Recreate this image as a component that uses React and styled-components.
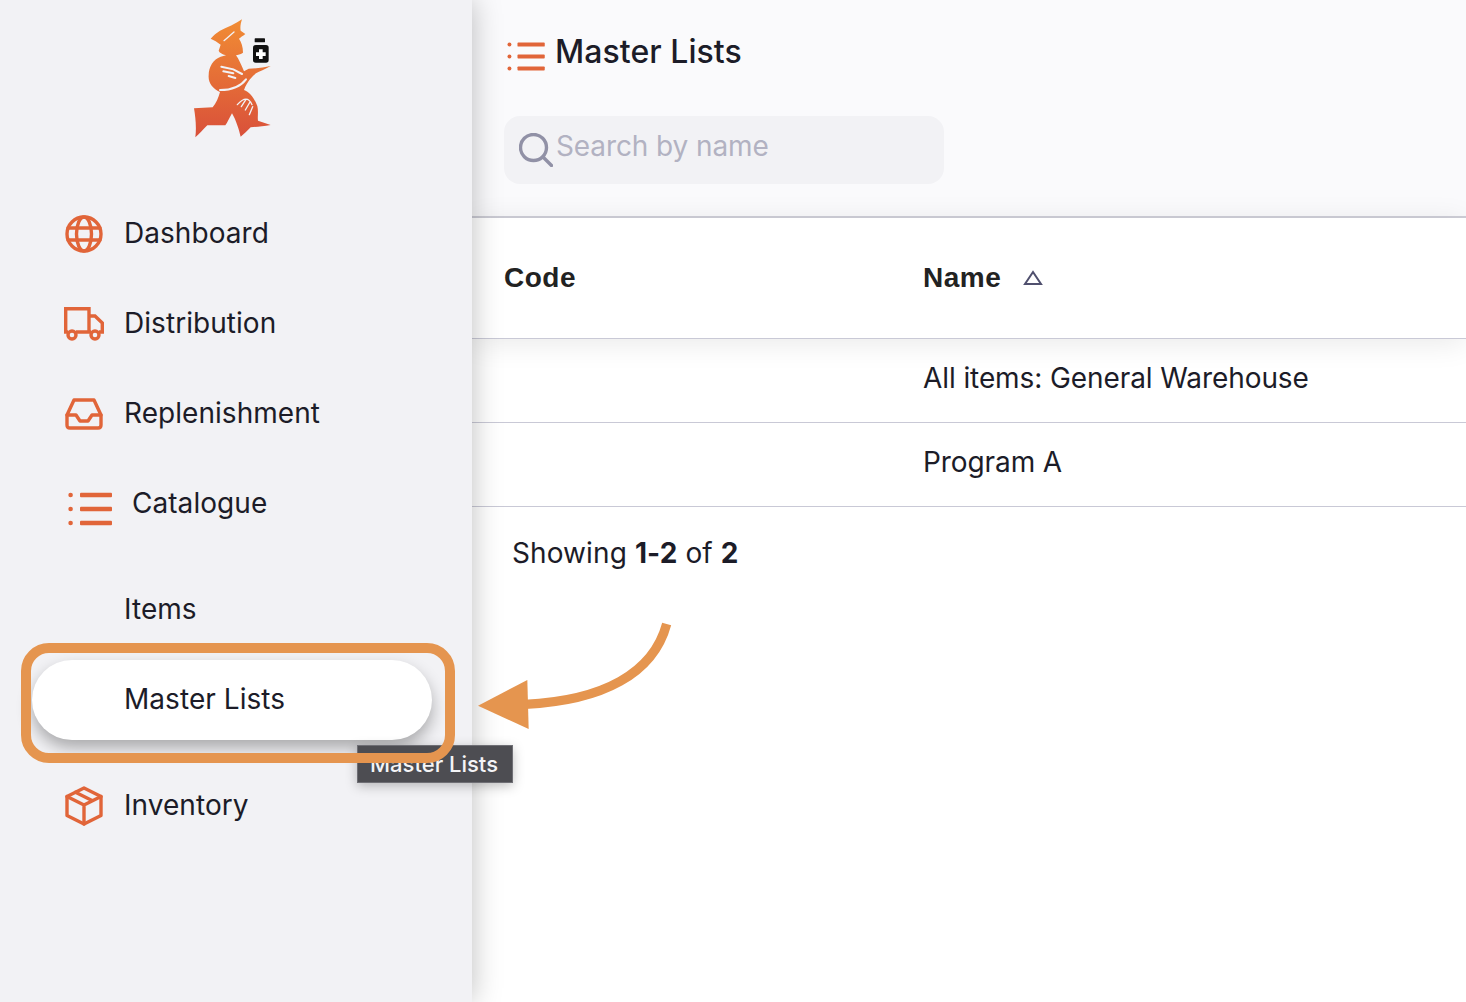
import React from 'react';
import styled, { createGlobalStyle } from 'styled-components';

const GlobalStyle = createGlobalStyle`
  html, body { margin: 0; padding: 0; background: #fff; }
  body { font-family: Inter, "Noto Sans", sans-serif; color: #1c1c28; }
  * { box-sizing: border-box; }
`;

const ORANGE = '#e16539';
const ACCENT = '#e5954f';

const Page = styled.div`
  position: relative;
  display: flex;
  width: 1466px;
  height: 1002px;
  overflow: hidden;
`;

const Sidebar = styled.aside`
  position: relative;
  z-index: 2;
  flex: 0 0 472px;
  padding: 10px 40px 0 32px;
  background: #f2f2f5;
  box-shadow: 0 0 28px rgba(0, 0, 0, 0.26);
`;

const LogoWrap = styled.div`
  display: flex;
  justify-content: center;
  margin-bottom: 49px;
`;

const Nav = styled.nav`
  display: flex;
  flex-direction: column;
  gap: 10px;
`;

const SubNav = styled.div`
  display: flex;
  flex-direction: column;
  gap: 10px;
  margin: 16px 0;
`;

const NavItem = styled.div`
  display: flex;
  align-items: center;
  gap: 20px;
  height: 80px;
  padding-left: ${(p) => (p.$sub ? '92px' : '32px')};
  border-radius: 40px;
  background: ${(p) => (p.$active ? '#fff' : 'transparent')};
  box-shadow: ${(p) => (p.$active ? '0 8px 16px rgba(0, 0, 0, 0.3)' : 'none')};
`;

const NavLabel = styled.span`
  margin-top: -2px;
  font-size: 28px;
  line-height: 34px;
  letter-spacing: 0.05px;
  color: #1c1c28;
`;

const IconSlot = styled.span`
  display: flex;
  align-items: center;
  justify-content: ${(p) => (p.$wide ? 'flex-end' : 'center')};
  flex: 0 0 ${(p) => (p.$wide ? '48px' : '40px')};
  height: 44px;
  padding-top: ${(p) => (p.$wide ? '10px' : '0')};
`;

const Main = styled.main`
  flex: 1;
  display: flex;
  flex-direction: column;
  min-width: 0;
`;

const Header = styled.header`
  height: 218px;
  padding: 32px 32px 0;
  background: #fafafc;
  border-bottom: 2px solid #cfcfd8;
`;

const TitleRow = styled.div`
  display: flex;
  align-items: center;
  gap: 10px;
  height: 40px;
  padding-left: 3px;
`;

const TitleIcon = styled.span`
  display: flex;
  padding-top: 8px;
`;

const Title = styled.h1`
  margin: 0;
  font-size: 32px;
  line-height: 40px;
  font-weight: 500;
  letter-spacing: 0.05px;
  color: #1c1c28;
`;

const SearchBox = styled.div`
  display: flex;
  align-items: center;
  gap: 3px;
  width: 440px;
  height: 68px;
  margin-top: 44px;
  padding: 0 0 0 15px;
  background: #f2f2f5;
  border-radius: 16px;
`;

const Placeholder = styled.span`
  position: relative;
  top: -4px;
  font-size: 28px;
  letter-spacing: -0.1px;
  color: #b2b2c2;
`;

const TableRow = styled.div`
  display: grid;
  grid-template-columns: 419px 1fr;
  align-items: center;
  height: ${(p) => (p.$head ? '121px' : '84px')};
  padding-left: 32px;
  border-bottom: 1px solid #c9c9d6;
  font-size: 28px;
  color: #1c1c28;
  letter-spacing: -0.09px;
  ${(p) => (p.$head ? 'box-shadow: 0 4px 28px rgba(0, 0, 0, 0.09); position: relative;' : '')}
`;

const RowCell = styled.div`
  padding-bottom: 6px;
`;

const HeadCell = styled.div`
  display: flex;
  align-items: center;
  gap: 22px;
  font-family: "Liberation Sans", Arial, sans-serif;
  font-weight: 700;
  font-size: 28px;
  letter-spacing: 0.5px;
  color: #222;
`;

const Footer = styled.div`
  padding: 28px 0 0 40px;
  font-size: 28px;
  line-height: 36px;
  letter-spacing: 0.1px;
  color: #1c1c28;

  b { font-weight: 700; }
`;

const Tooltip = styled.div`
  position: absolute;
  z-index: 3;
  left: 357px;
  top: 745px;
  display: flex;
  align-items: center;
  justify-content: center;
  width: 156px;
  height: 38px;
  padding-right: 2px;
  background: #4d4d52;
  border: 1px solid #6f6f75;
  color: #f4f4f6;
  font-size: 22px;
  font-weight: 500;
  box-shadow: 0 3px 12px rgba(0, 0, 0, 0.25);
`;

const Highlight = styled.div`
  position: absolute;
  z-index: 4;
  left: 21px;
  top: 643px;
  width: 434px;
  height: 120px;
  border: 10px solid ${ACCENT};
  border-radius: 28px;
`;

const ArrowSvg = styled.svg`
  position: absolute;
  z-index: 4;
  left: 470px;
  top: 610px;
`;

const Logo = () => (
  <svg width="120" height="135" viewBox="6 0 360 405">
    <defs>
      <linearGradient id="logoFill" x1="0" y1="0" x2="0" y2="1">
        <stop offset="0" stopColor="#f18c34" />
        <stop offset="1" stopColor="#d9503a" />
      </linearGradient>
    </defs>
    <path
      fill="url(#logoFill)"
      d="M216 28 C212 40 210 52 212 62 L226 72 C218 78 212 82 207 86 C214 96 219 110 219 128 C210 134 204 134 198 136 C206 146 214 165 222 184 L236 176 C258 176 282 172 302 168 C285 178 268 184 258 190 C248 198 232 214 222 240 C238 246 252 262 262 288 C266 305 262 320 264 332 L302 345 C280 350 260 350 242 352 C232 362 222 372 212 380 C208 362 198 330 186 310 C178 325 172 338 166 346 L112 346 C100 358 88 372 76 382 C80 350 76 320 72 295 L128 292 C138 280 146 262 150 246 C128 236 114 218 116 196 C116 170 130 148 152 140 L168 136 C156 132 148 128 146 122 L152 104 C142 96 132 90 122 86 C130 76 140 68 150 62 C172 52 196 42 216 28 Z"
    />
    <g fill="none" stroke="#f2f2f5" strokeLinecap="round">
      <path strokeWidth="4" d="M192 66 L162 92" />
      <path strokeWidth="6" d="M154 170 L190 178 L216 192 M160 184 L190 190 M176 198 L196 204" />
      <path strokeWidth="6" d="M150 240 C180 240 210 232 228 208" />
      <path strokeWidth="4" d="M202 284 C222 262 236 262 246 284 M214 290 L228 268 M226 300 L240 276 M238 314 L248 290" />
    </g>
    <rect x="254" y="85" width="31" height="12" rx="2" fill="#111" />
    <rect x="249" y="105" width="47" height="53" rx="8" fill="#111" />
    <path d="M267 118 h11 v9 h9 v11 h-9 v9 h-11 v-9 h-9 v-11 h9 Z" fill="#fff" />
  </svg>
);

const iconProps = {
  fill: 'none',
  stroke: ORANGE,
  strokeLinecap: 'round',
  strokeLinejoin: 'round',
};

const GlobeIcon = () => (
  <svg width="38" height="38" viewBox="0 0 38 38" {...iconProps} strokeWidth="3.4">
    <circle cx="19" cy="19" r="17" />
    <ellipse cx="19" cy="19" rx="7.5" ry="17" />
    <path d="M3 13 H35 M3 25 H35" />
  </svg>
);

const TruckIcon = () => (
  <svg width="40" height="34" viewBox="0 0 40 34" {...iconProps} strokeWidth="3.4">
    <path d="M4 25 H1.7 V1.7 H25 V25 H12 M25 9 H31 L38.3 16 V25 H35 M25 25 H27" strokeLinecap="butt" strokeLinejoin="miter" />
    <circle cx="8" cy="28" r="4" />
    <circle cx="31" cy="28" r="4" />
  </svg>
);

const InboxIcon = () => (
  <svg width="38" height="32" viewBox="0 0 38 32" {...iconProps} strokeWidth="3.4">
    <path d="M2 17 L9 2 H29 L36 17 V27 Q36 30 33 30 H5 Q2 30 2 27 Z" />
    <path d="M2 17 H11 L15 23 H23 L27 17 H36" />
  </svg>
);

const ListIcon = ({ w = 44, h = 34 }) => (
  <svg width={w} height={h} viewBox="0 0 44 34" fill={ORANGE}>
    <circle cx="2.6" cy="3" r="2.3" />
    <circle cx="2.6" cy="17" r="2.3" />
    <circle cx="2.6" cy="31" r="2.3" />
    <rect x="12" y="0.7" width="32" height="4.6" rx="1" />
    <rect x="12" y="14.7" width="32" height="4.6" rx="1" />
    <rect x="12" y="28.7" width="32" height="4.6" rx="1" />
  </svg>
);

const BoxIcon = () => (
  <svg width="38" height="40" viewBox="0 0 38 40" {...iconProps} strokeWidth="3.4">
    <path d="M19 2 L36 10.5 V29.5 L19 38 L2 29.5 V10.5 Z" />
    <path d="M2 10.5 L19 19 L36 10.5 M19 19 V38 M10.5 6.2 L27.5 14.8" />
  </svg>
);

const SearchIcon = () => (
  <svg width="34" height="34" viewBox="0 0 34 34" fill="none" stroke="#9191a6" strokeWidth="3.4" strokeLinecap="round">
    <circle cx="14.5" cy="14.5" r="13" />
    <path d="M24 24 L32.5 32.5" />
  </svg>
);

const SortIcon = () => (
  <svg width="20" height="16" viewBox="0 0 20 16" fill="none" stroke="#50506e" strokeWidth="2">
    <path d="M10 2 L18 14 H2 Z" />
  </svg>
);

const rows = ['All items: General Warehouse', 'Program A'];

export default function App() {
  return (
    <Page>
      <GlobalStyle />
      <Sidebar>
        <LogoWrap><Logo /></LogoWrap>
        <Nav>
          <NavItem><IconSlot><GlobeIcon /></IconSlot><NavLabel>Dashboard</NavLabel></NavItem>
          <NavItem><IconSlot><TruckIcon /></IconSlot><NavLabel>Distribution</NavLabel></NavItem>
          <NavItem><IconSlot><InboxIcon /></IconSlot><NavLabel>Replenishment</NavLabel></NavItem>
          <NavItem><IconSlot $wide><ListIcon /></IconSlot><NavLabel>Catalogue</NavLabel></NavItem>
          <SubNav>
            <NavItem $sub><NavLabel>Items</NavLabel></NavItem>
            <NavItem $sub $active><NavLabel>Master Lists</NavLabel></NavItem>
          </SubNav>
          <NavItem><IconSlot><BoxIcon /></IconSlot><NavLabel>Inventory</NavLabel></NavItem>
        </Nav>
      </Sidebar>
      <Main>
        <Header>
          <TitleRow>
            <TitleIcon><ListIcon w={38} h={29} /></TitleIcon>
            <Title>Master Lists</Title>
          </TitleRow>
          <SearchBox>
            <SearchIcon />
            <Placeholder>Search by name</Placeholder>
          </SearchBox>
        </Header>
        <TableRow $head>
          <HeadCell>Code</HeadCell>
          <HeadCell>Name <SortIcon /></HeadCell>
        </TableRow>
        {rows.map((name) => (
          <TableRow key={name}>
            <RowCell />
            <RowCell>{name}</RowCell>
          </TableRow>
        ))}
        <Footer>Showing <b>1-2</b> of <b>2</b></Footer>
      </Main>
      <Tooltip>Master Lists</Tooltip>
      <Highlight />
      <ArrowSvg width="220" height="130" viewBox="0 0 660 390">
        <path d="M590 42 C 550 190, 400 272, 165 283" fill="none" stroke={ACCENT} strokeWidth="28" />
        <path d="M24 287 L172 210 L176 357 Z" fill={ACCENT} />
      </ArrowSvg>
    </Page>
  );
}
